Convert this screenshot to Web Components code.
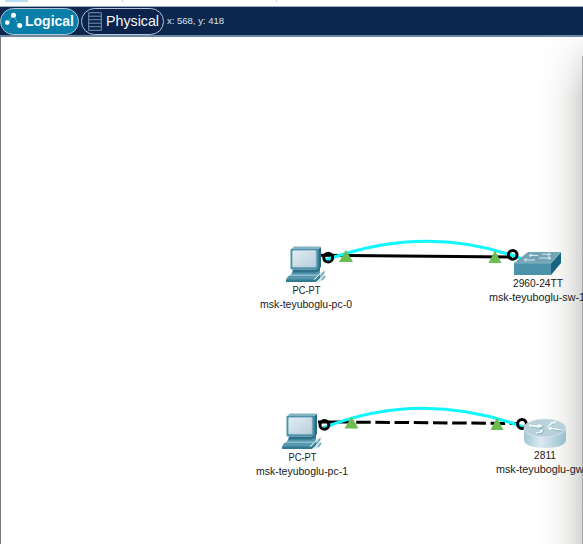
<!DOCTYPE html>
<html lang="en"><head><meta charset="utf-8"><title>Logical workspace</title>
<style>html,body{margin:0;width:583px;height:544px;overflow:hidden;background:#fff;font-family:"Liberation Sans",Arial,sans-serif}</style></head>
<body><workspace-app></workspace-app>
<script>
class ViewTab extends HTMLElement{
 connectedCallback(){
  const logical=this.getAttribute('kind')==='logical';
  const icon=logical
  ?`<svg width="21" height="20" viewBox="0 0 21 20"><path d="M4.500 11.500L10.500 4L16 14.500" fill="none" stroke="#b9e2f0" stroke-width="1" stroke-dasharray="1.2 1.5"/><g fill="#fff"><circle cx="4.300" cy="11.600" r="2.300"/><circle cx="10.500" cy="4.200" r="2.500"/><circle cx="16.700" cy="14.600" r="2.500"/></g></svg>`
  :`<svg width="14" height="19" viewBox="0 0 14 19"><path d="M.7.7H13.3V18.3H.7ZM.7 4.2H13.3M.7 7.7H13.3M.7 11.2H13.3M.7 14.7H13.3" fill="none" stroke="#7890ad" stroke-width="1"/></svg>`;
  this.attachShadow({mode:'open'}).innerHTML=`<style>
  :host{display:flex;box-sizing:border-box;height:27px;border:1px solid #b5c5d5;border-radius:14px;align-items:center;color:#f4f7fa;white-space:nowrap;font-size:14.5px}
  :host([kind=logical]){width:79px;background:#087fa9;padding-left:2px;font-weight:bold;font-size:14px}
  :host([kind=physical]){width:83px;background:#0b234a;padding-left:6px;gap:4px}
  svg{flex:none}</style>${icon}<svg width="55" height="20"><text x="${logical?1:0}" y="15" fill="#f4f7fa" textLength="${logical?49:53}" lengthAdjust="spacingAndGlyphs"></text></svg>`;
  this.shadowRoot.querySelector('text').textContent=this.textContent;
 }}
customElements.define('view-tab',ViewTab);

class ViewBar extends HTMLElement{
 constructor(){super();this.attachShadow({mode:'open'}).innerHTML=`<style>
 :host{display:block}
 .edge{height:6px;background:#fdfdfe;display:flex}
 .edge i{display:block;height:2px}
 .a{margin-left:5px;width:23px;background:#b9ddf3}.b{margin-left:94px;width:1px;background:#d5d8dc}.c{margin-left:153px;width:1px;background:#d5d8dc}
 .bar{box-sizing:border-box;height:31px;display:flex;align-items:center;gap:2px;background:#0b274d;border-top:1px solid #9fb1c4;border-bottom:2px solid #6f86a0}</style>
 <div class="edge"><i class="a"></i><i class="b"></i><i class="c"></i></div>
 <div class="bar"><view-tab kind="logical">Logical</view-tab><view-tab kind="physical">Physical</view-tab><svg width="70" height="16"><text x="1" y="11" font-size="9.5" fill="#dde5ed" textLength="57">x: 568, y: 418</text></svg></div>`}}
customElements.define('view-bar',ViewBar);

const art={
pc:`<defs><linearGradient id="s" x2="1" y2="1"><stop stop-color="#e3edf3"/><stop offset="1" stop-color="#b7cddd"/></linearGradient></defs>
 <path d="M36 28l4-3 2 1-2 4 2 1-4 5-4 1-2-2z" fill="#d3e5ea"/><path d="M36 32l4-5M38 35l3-4" stroke="#6fa8ba" stroke-width="1.5"/>
 <path d="M33 5l4-3V22l-4 4z" fill="#286d84"/><path d="M6.500 4.500L10 1.500H37L33.500 5z" fill="#82b3c4"/>
 <rect x="6.500" y="4" width="28" height="20.500" rx="1" fill="#4d92a9"/><rect x="8.500" y="5.500" width="23.500" height="16.500" rx="1" fill="url(#s)" stroke="#a8cad5" stroke-width=".8"/>
 <path d="M9 24.500H32L36 22V26L32 28H8z" fill="#2b7189"/><path d="M8 27.500H33L36 25V28L32 32H6z" fill="#5396ad"/>
 <path d="M6 29.500H35L30 34H3z" fill="#8fbecd"/><path d="M4 31H33L29 35H2z" fill="#5798ae"/><path d="M2 34.500H31L36 29.500V33L32 37H2z" fill="#347b92"/>`,
sw:`<path d="M2 12L16 1H49L39 12z" fill="#72a4b5"/><path d="M39 12L49 1V12L39 24z" fill="#176480"/><path d="M2 12H39V24H2z" fill="#4b92aa"/><path d="M2 12H39L49 1" fill="none" stroke="#91becb" stroke-width=".8"/>
 <g fill="none" stroke="#d7e9ee" stroke-width="1"><path d="M18 4.500h8M30 3.200h8M27 7h11M13 9h10"/><path d="M20 3l-3 1.500 2 1.200M36.500 2l2 1.200-3 1.300M36 5.700l3 1.300-3 1.300M15 7.700l-3 1.300 2 1.300"/></g>`,
router:`<defs><linearGradient id="r"><stop stop-color="#a3c7d2"/><stop offset=".4" stop-color="#dceaf0"/><stop offset="1" stop-color="#96bfcb"/></linearGradient></defs>
 <path d="M1 10V22C1 27 10 30 22 30S43 27 43 22V10z" fill="url(#r)"/><ellipse cx="22" cy="10" rx="21" ry="9" fill="#b8d1db" stroke="#d7e6eb" stroke-width=".8"/>
 <g fill="none" stroke="#86b0bd" stroke-width="1.300"><path d="M7 8.500l11 1.700 3-2M38 13l-12-2.500M14 15.500h4l3-3.500M26 8.500l5-3.500"/></g>
 <g fill="#f6fbfc"><path d="M6 6.500l8 1 2-1.500 4 2-4 1.700-10-1.500zM24 10l5-2-1 1.700 11 1.800-1.500 1-9-1.300-1 1zM13 14.300l3-.2 3-2.600 1.500.7-2.500 2.800-5 .4zM24 8.200l4-3.300-1-1 6-.5-.5 2-2-.2-5 3.500z"/></g>`};
class NetDevice extends HTMLElement{
 connectedCallback(){
  const g=n=>this.getAttribute(n);
  this.style.left=g('x')+'px';this.style.top=g('y')+'px';
  this.attachShadow({mode:'open'}).innerHTML=`<style>:host{position:absolute;display:block}svg{display:block;overflow:visible}text{font-size:11px;fill:#202020}</style>
  <svg width="50" height="65">${art[g('kind')]}<text x="${g('mx')}" y="${g('ty')}" text-anchor="middle" textLength="${g('mw')}" lengthAdjust="spacingAndGlyphs">${g('model')}</text><text x="${g('nx')}" y="${+g('ty')+14}" textLength="${g('nw')}" lengthAdjust="spacingAndGlyphs">${g('name')}</text></svg>`;
 }}
customElements.define('net-device',NetDevice);

class CableLayer extends HTMLElement{
 constructor(){super();this.attachShadow({mode:'open'}).innerHTML=`<style>:host{position:absolute;inset:0}svg{display:block}</style>
 <svg width="583" height="507" viewBox="0 37 583 507" fill="none">
 <path d="M320 255.300L512 257" stroke="#000" stroke-width="3"/>
 <path d="M318 422H341" stroke="#000" stroke-width="3"/><path d="M341 422L519 423.500" stroke="#000" stroke-width="3" stroke-dasharray="14.500 4.700" stroke-dashoffset="4"/>
 <path d="M323 261Q427 222 525 260" stroke="#12f6fd" stroke-width="3.200"/>
 <path d="M323 428Q422 388.500 526 428" stroke="#12f6fd" stroke-width="3.200"/>
 <g fill="#6bbd50"><path d="M346 250l7 12h-14zM495 250.500l6.500 12.500h-13zM351.500 416.500l7 12h-14zM497 417.500l6.500 12.500h-13z"/></g>
 <g stroke="#000" stroke-width="3"><circle cx="328.200" cy="257.700" r="4.400"/><circle cx="512.700" cy="254.800" r="4.400"/><circle cx="324.400" cy="424.800" r="4.400"/><circle cx="522" cy="424" r="4.400"/></g></svg>`}}
customElements.define('cable-layer',CableLayer);

class WorkspaceApp extends HTMLElement{
 constructor(){super();this.attachShadow({mode:'open'}).innerHTML=`<style>
 :host{display:flex;flex-direction:column;width:583px;height:544px}
 main{position:relative;flex:1;box-sizing:border-box;overflow:hidden;background:#fff}
 .rule{position:absolute;left:0;top:0;bottom:0;width:1px;background:#777e85}
 .shade{position:absolute;right:0;top:0;bottom:0;width:45px;background:linear-gradient(90deg,#fff0,#f9f9f8 35%,#eeeeed 65%,#d4d4d4);-webkit-mask:linear-gradient(#0002,#000 60px);mask:linear-gradient(#0002,#000 60px)}
 .side{position:absolute;right:0;top:19px;bottom:0;width:1px;background:#a6a6a6}
 </style><view-bar></view-bar><main><div class="shade"></div><div class="side"></div><cable-layer></cable-layer>
 <net-device kind="pc" x="284" y="208" model="PC-PT" name="msk-teyuboglu-pc-0" mx="22.500" mw="28" ty="49" nx="-24" nw="92"></net-device>
 <net-device kind="sw" x="512" y="214" model="2960-24TT" name="msk-teyuboglu-sw-1" mx="26" mw="50" ty="36" nx="-23" nw="96"></net-device>
 <net-device kind="pc" x="280" y="375" model="PC-PT" name="msk-teyuboglu-pc-1" mx="22.500" mw="28" ty="49" nx="-24" nw="92"></net-device>
 <net-device kind="router" x="523" y="381" model="2811" name="msk-teyuboglu-gw-1" mx="22" mw="22" ty="41" nx="-27" nw="97"></net-device>
 <div class="rule"></div></main>`}}
customElements.define('workspace-app',WorkspaceApp);
</script></body></html>
